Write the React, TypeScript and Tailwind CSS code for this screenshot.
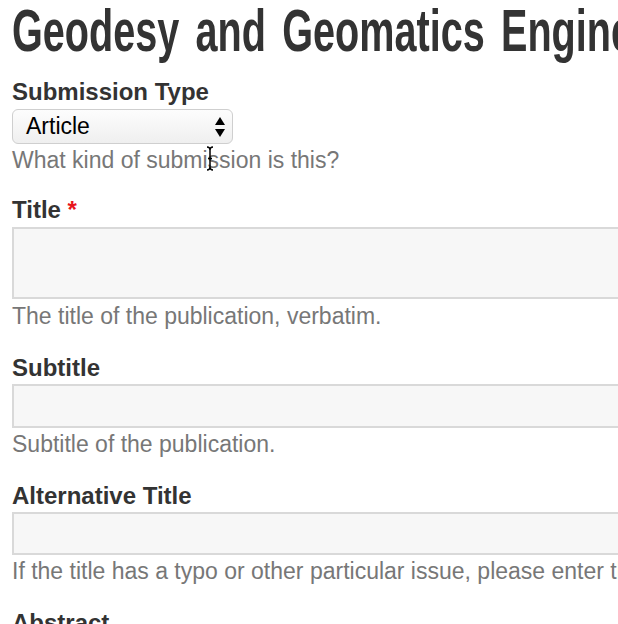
export default function App() {
  const body = { fontFamily: '"Liberation Sans", Arial, sans-serif' };

  return (
    <div className="w-[618px] h-[624px] overflow-hidden bg-white text-[#333]" style={body}>
      <div className="relative px-3">
        <h1
          className="pt-[1px] text-[60px] leading-[60px] whitespace-nowrap text-[#333] font-bold origin-left scale-x-[0.66] [word-spacing:8px]"
          style={{ fontFamily: '"Liberation Sans Narrow", "Arial Narrow", "Liberation Sans", sans-serif' }}
        >
          Geodesy and Geomatics Engineering
        </h1>

        {/* Submission type */}
        <div className="mt-[19px]">
          <label className="block text-[24px] leading-[24px] font-bold">Submission Type</label>
          <div className="mt-[5px] flex h-[35px] w-[221px] items-center justify-between rounded-[6px] border border-[#cfcfcf] bg-gradient-to-b from-[#fdfdfd] to-[#efefef] pl-[13px] pr-[7px]">
            <span className="text-[23px] leading-none text-black">Article</span>
            <svg width="10" height="20" viewBox="0 0 10 20" className="text-black">
              <path d="M5 0 L10 8 L0 8 Z" fill="currentColor" />
              <path d="M0 12 L10 12 L5 20 Z" fill="currentColor" />
            </svg>
          </div>
          <p className="mt-[4px] text-[23px] leading-[24px] text-[#777] whitespace-nowrap">What kind of submission is this?</p>
        </div>

        {/* Title */}
        <div className="mt-[26px]">
          <label className="block text-[24px] leading-[24px] font-bold">
            Title <span className="text-[#e8141b]">*</span>
          </label>
          <div className="mt-[5px] h-[72px] w-[700px] border-2 border-[#d9d9d9] bg-[#f7f7f7]" />
          <p className="mt-[5px] text-[23px] leading-[24px] text-[#777] whitespace-nowrap">
            The title of the publication, verbatim.
          </p>
        </div>

        {/* Subtitle */}
        <div className="mt-[28px]">
          <label className="block text-[24px] leading-[24px] font-bold">Subtitle</label>
          <div className="mt-[4px] h-[44px] w-[700px] border-2 border-[#d9d9d9] bg-[#f7f7f7]" />
          <p className="mt-[4px] text-[23px] leading-[24px] text-[#777] whitespace-nowrap">Subtitle of the publication.</p>
        </div>

        {/* Alternative title */}
        <div className="mt-[28px]">
          <label className="block text-[24px] leading-[24px] font-bold">Alternative Title</label>
          <div className="mt-[4px] h-[43px] w-[700px] border-2 border-[#d9d9d9] bg-[#f7f7f7]" />
          <p className="mt-[4px] text-[23px] leading-[24px] text-[#777] whitespace-nowrap">
            If the title has a typo or other particular issue, please enter the correct title here.
          </p>
        </div>

        {/* Abstract */}
        <div className="mt-[28px]">
          <label className="block text-[24px] leading-[24px] font-bold">Abstract</label>
        </div>

        {/* text cursor */}
        <svg
          width="8"
          height="25"
          viewBox="0 0 8 25"
          className="absolute left-[206px] top-[146px]"
        >
          <path
            d="M1 1 Q4 1 4 4 L4 21 Q4 24 1 24 M7 1 Q4 1 4 4 M4 21 Q4 24 7 24 M2 12.5 L6 12.5"
            stroke="#000"
            strokeWidth="1.5"
            fill="none"
          />
        </svg>
      </div>
    </div>
  );
}
